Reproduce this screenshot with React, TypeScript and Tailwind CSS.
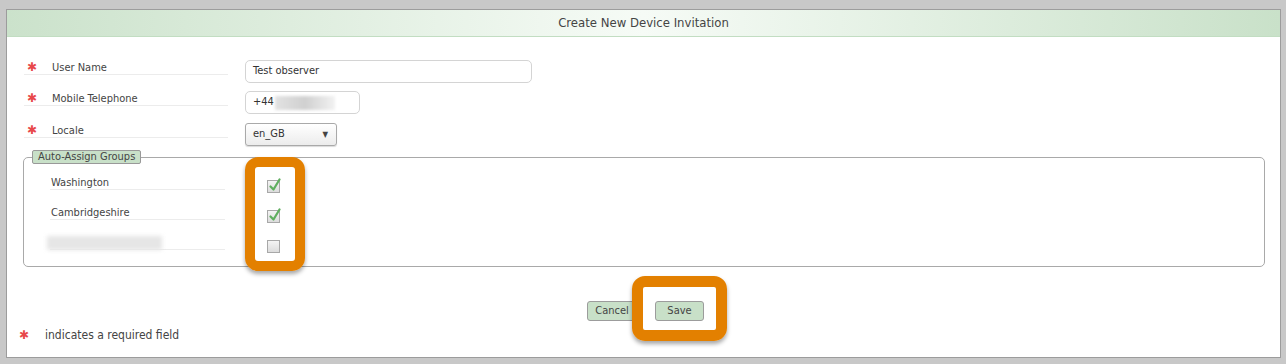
import React from "react";

const Star = () => (
  <span className="inline-block w-[10px] text-center text-[#e8484a] text-[12px] leading-[13px] font-bold" style={{ fontFamily: '"DejaVu Sans", sans-serif' }}>✱</span>
);

const Check = ({ checked }: { checked: boolean }) => (
  <div className="w-[13px] h-[13px] border border-[#a8a8a8] bg-gradient-to-b from-[#f4f4f4] to-[#dcdcdc] relative">
    {checked && (
      <svg className="absolute left-[1px] top-[-3px]" width="12" height="14" viewBox="0 0 12 14">
        <path d="M1.5 8.5 L4.5 11.5 L10.5 1.5" fill="none" stroke="#5fae5f" strokeWidth="2.2" strokeLinecap="round" strokeLinejoin="round" />
      </svg>
    )}
  </div>
);

export default function App() {
  const font = { fontFamily: '"DejaVu Sans Condensed", "Liberation Sans", sans-serif' };
  return (
    <div className="w-[1286px] h-[364px] bg-[#c8c8c8] pt-[9px] pl-[6px] pr-[5px] overflow-hidden text-[11px] text-[#444]" style={font}>
      <div className="h-[349px] bg-white border border-[#9c9c9c] flex flex-col relative">
        <div className="h-[27px] shrink-0 bg-gradient-to-r from-[#cbe2cb] via-[#f6fbf6] to-[#c9e1c9] border-b border-[#c2ddc2] flex items-center justify-center text-[13px] text-[#444]">
          Create New Device Invitation
        </div>

        <div className="flex flex-col pt-[23px]">
          {[
            { label: "User Name", w: "w-[287px]", value: <span>Test observer</span> },
            {
              label: "Mobile Telephone",
              w: "w-[115px]",
              value: (
                <span className="flex items-center">
                  +44<span className="inline-block w-[60px] h-[14px] ml-[1px] bg-gradient-to-r from-[#e2e2e2] via-[#d0d0d0] to-[#f2f2f2] blur-[1.5px]"></span>
                </span>
              ),
            },
          ].map((r, i) => (
            <div key={i} className={`flex items-start ml-[17px] ${i === 0 ? "h-[31px]" : "h-[32px]"}`}>
              <div className="w-[204px] h-[14px] mt-[1px] border-b border-[#ececec] flex items-start leading-[13px]">
                <span className="ml-[3px]"><Star /></span>
                <span className="ml-[15px]">{r.label}</span>
              </div>
              <div className={`ml-[17px] ${r.w} h-[23px] border border-[#d4d4d4] rounded-[5px] flex items-center pl-[7px] text-[#333]`}>
                {r.value}
              </div>
            </div>
          ))}
          <div className="flex items-start ml-[17px] h-[27px]">
            <div className="w-[204px] h-[14px] mt-[1px] border-b border-[#ececec] flex items-start leading-[13px]">
              <span className="ml-[3px]"><Star /></span>
              <span className="ml-[15px]">Locale</span>
            </div>
            <div className="ml-[17px] w-[92px] h-[23px] border border-[#a9a9a9] rounded-[3px] bg-gradient-to-b from-white to-[#ececec] shadow-[0_1px_1px_rgba(0,0,0,0.15)] flex items-center justify-between pl-[7px] pr-[8px] text-[#333]">
              <span>en_GB</span>
              <span className="text-[8px] text-[#444]">▼</span>
            </div>
          </div>

          <fieldset className="ml-[16px] mr-[15px] border border-[#a9a9a9] rounded-[5px] h-[117px] relative">
            <legend className="ml-[8px] h-[14px] px-[5px] bg-[#c8e0c8] border border-[#999] rounded-[2px] text-[11px] leading-[12px] text-[#444]">
              Auto-Assign Groups
            </legend>
            <div className="flex flex-col pt-[12px]">
              {[
                { label: <span>Washington</span>, checked: true },
                { label: <span>Cambridgeshire</span>, checked: true },
                { label: <span className="inline-block w-[115px] h-[14px] bg-[#e6e6e6] blur-[2px] -ml-[4px]"></span>, checked: false },
              ].map((g, i) => (
                <div key={i} className="flex items-start h-[30px] ml-[26px]">
                  <div className="w-[175px] h-[14px] border-b border-[#ececec] leading-[13px] pl-[1px]">{g.label}</div>
                  <div className="ml-[42px] mt-[4px]"><Check checked={g.checked} /></div>
                </div>
              ))}
            </div>
            <div className="absolute left-[221px] top-[-7px] w-[60px] h-[114px] border-[10px] border-[#e38000] rounded-[13px] shadow-[0_3px_4px_rgba(0,0,0,0.35)]"></div>
          </fieldset>

          <div className="flex justify-center gap-[18px] mt-[34px] pl-[4px] relative">
            <button className="w-[50px] h-[20px] bg-[#c8e0c8] border border-[#9c9c9c] rounded-[3px] text-[11px] text-[#444]" style={font}>Cancel</button>
            <button className="w-[49px] h-[20px] bg-[#c8e0c8] border border-[#9c9c9c] rounded-[3px] text-[11px] text-[#444]" style={font}>Save</button>
            <div className="absolute left-[625px] top-[-25px] w-[95px] h-[65px] border-[11px] border-[#e38000] rounded-[13px] shadow-[0_3px_4px_rgba(0,0,0,0.35)]"></div>
          </div>

          <div className="flex items-center ml-[12px] mt-[7px] leading-[14px] text-[12px]">
            <Star />
            <span className="ml-[16px]">indicates a required field</span>
          </div>
        </div>
      </div>
    </div>
  );
}
